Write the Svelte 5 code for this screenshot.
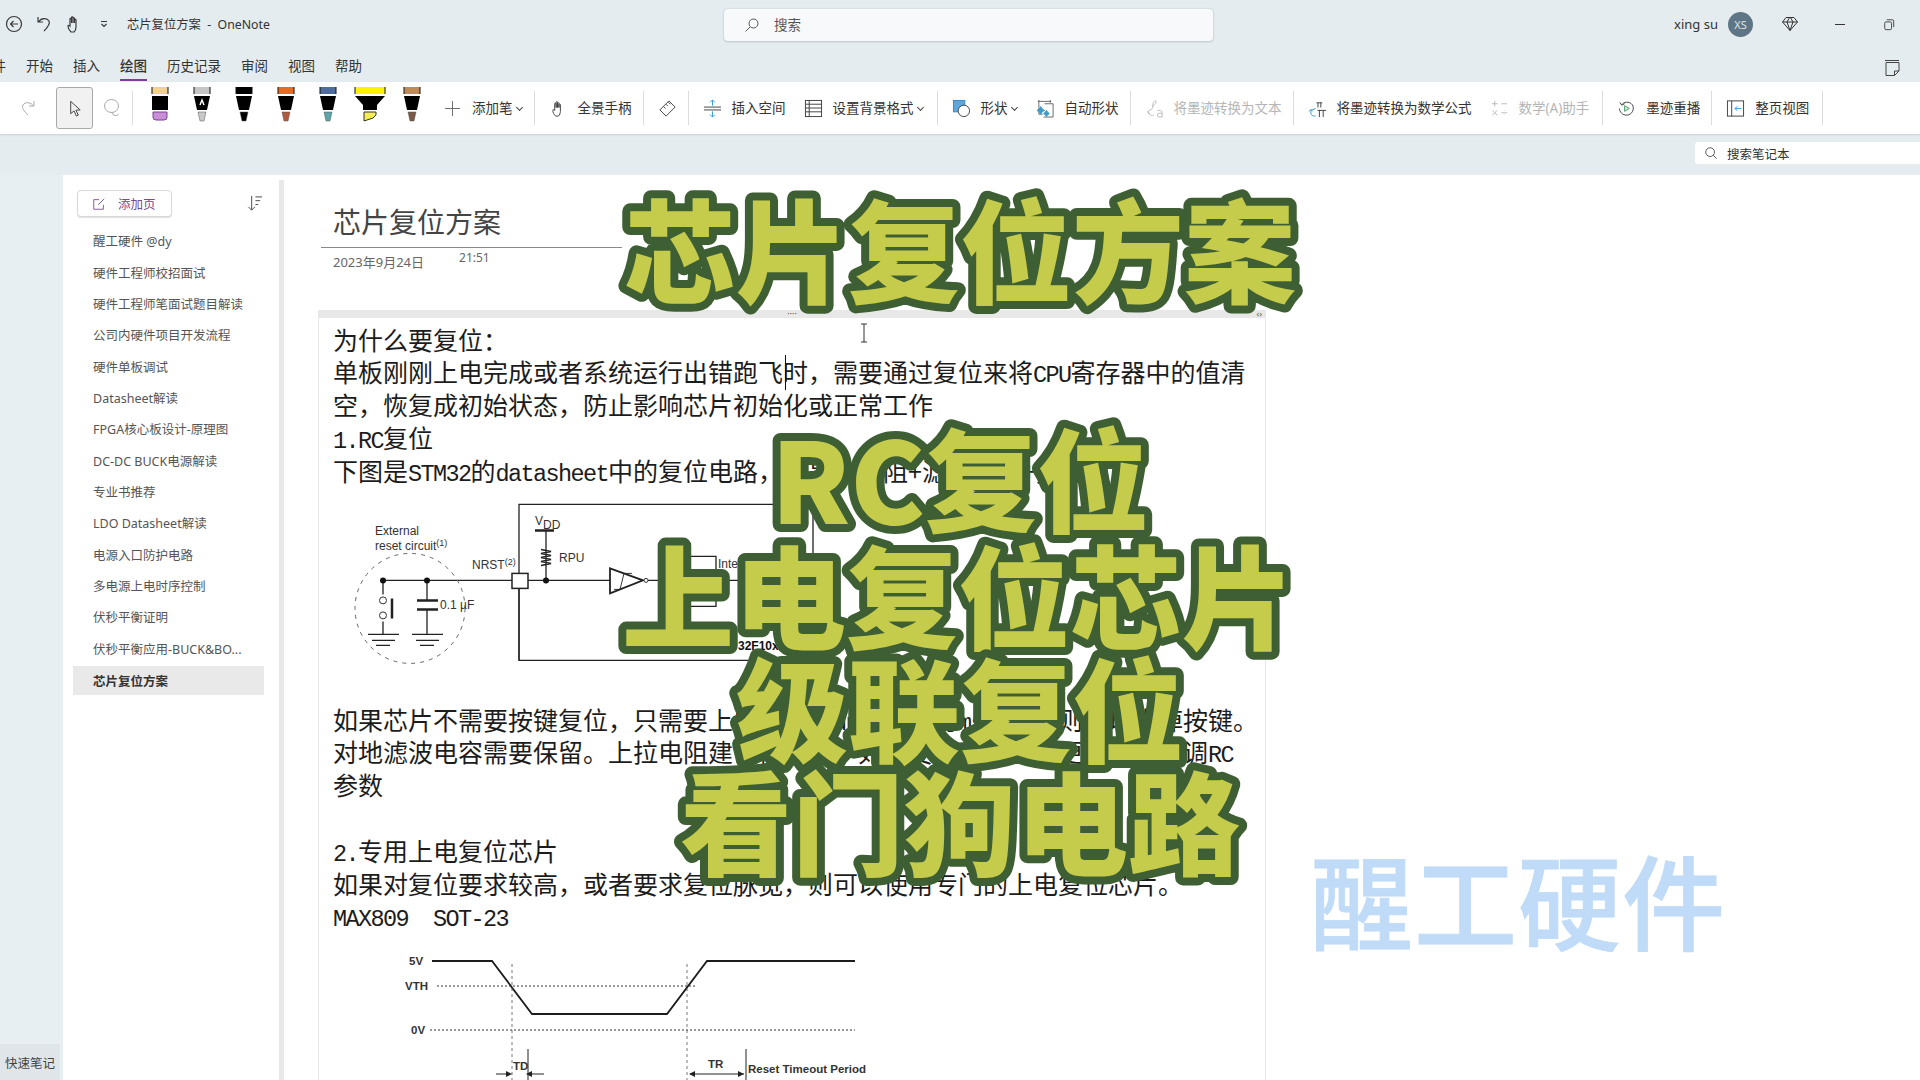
<script>
  const tabs = ['文件','开始','插入','绘图','历史记录','审阅','视图','帮助'];
  const pages = ['醒工硬件 @dy','硬件工程师校招面试','硬件工程师笔面试题目解读','公司内硬件项目开发流程','硬件单板调试','Datasheet解读','FPGA核心板设计-原理图','DC-DC BUCK电源解读','专业书推荐','LDO Datasheet解读','电源入口防护电路','多电源上电时序控制','伏秒平衡证明','伏秒平衡应用-BUCK&BO...','芯片复位方案'];
  const pens = [
    { cap:'#f2d28e', tip:'#c98fd6', kind:'eraser' },
    { cap:'#c6c6c6', tip:'#c8c8c8', kind:'pen', mark:true },
    { cap:'#000000', tip:'#000000', kind:'pen' },
    { cap:'#e86c1f', tip:'#b05a3f', kind:'pen' },
    { cap:'#4f6c9e', tip:'#5aa5a8', kind:'pen' },
    { cap:'#fff200', tip:'#f5ee50', kind:'marker' },
    { cap:'#c08a5a', tip:'#7a5a48', kind:'pen' }
  ];
</script>

<div class="app">
  <div class="titlebar">
    <svg class="qa first" viewBox="0 0 20 20"><circle cx="10" cy="10" r="7.500"/><path d="M14 10H6.500M9.500 7l-3 3 3 3"/></svg>
    <svg class="qa" viewBox="0 0 20 20"><path d="M4 3v5h5M4.500 8C7 4 13 3.500 15 7c1.500 3-1 6-5 10"/></svg>
    <svg class="qa" viewBox="0 0 20 20"><path d="M7 18c-2-2-3-4-3-6 0-1 1-1 2 0V5c0-1 1.500-1 1.500 0v4-5.500c0-1 1.500-1 1.500 0V9V4.500c0-1 1.500-1 1.500 0V9V6c0-1 1.500-1 1.500 0v7c0 2-1 4-2 5z"/></svg>
    <svg class="qa small" viewBox="0 0 10 10"><path d="M2 2.500h6M2.500 5L5 7.500 7.500 5"/></svg>
    <span class="doc">芯片复位方案&nbsp; - &nbsp;OneNote</span>
    <div class="search">
      <svg class="ic16" viewBox="0 0 16 16"><circle cx="9.500" cy="6.500" r="4.500"/><path d="M6 10l-4.500 4.500"/></svg>
      <span>搜索</span>
    </div>
    <div class="account">
      <span class="user">xing su</span>
      <span class="avatar">XS</span>
      <svg class="diamond" viewBox="0 0 18 18"><path d="M5 2.500h8l3.500 4.500L9 15.500 1.500 7zM1.500 7h15M6 7l3 8.500L12 7 9.500 2.500h-1z"/></svg>
      <span class="minimize"></span>
      <svg class="restore" viewBox="0 0 14 14"><rect x="2" y="4" width="8" height="9" rx="1.500"/><path d="M4.500 1.500H11a1.500 1.500 0 0 1 1.500 1.500v7"/></svg>
    </div>
  </div>

  <div class="menu">
    {#each tabs as t}
      <span class="tab" class:active={t === '绘图'}>{t}</span>
    {/each}
    <svg class="sticky" viewBox="0 0 18 18"><path d="M2 1.500h14M3 3.500h13v8.500l-4.500 4.500H3zM16 12h-4.500v4.500"/></svg>
  </div>

  <div class="toolbar">
    <svg class="tic redo" viewBox="0 0 20 20"><path d="M16 3v5h-5M15.500 8C13 4 7 3.500 5 7c-1.500 3 1 6 5 10"/></svg>
    <div class="select">
      <svg class="tic dark" viewBox="0 0 20 20"><path d="M6 2.500v13l3.500-3 2.500 5.500 2-1-2.500-5.200 4.500-.3z"/></svg>
    </div>
    <svg class="tic lasso" viewBox="0 0 20 20"><ellipse cx="9.500" cy="8" rx="7" ry="6.500"/><path d="M9 14.500c3 0 1 3 4 3s3-1 4-1.500"/></svg>
    <i class="sep sp12"></i>
    <div class="pens">
      {#each pens as p}
        <svg class="pen" viewBox="0 0 42 36">
          {#if p.kind === 'eraser'}
            <rect x="13" y="0" width="16" height="7" fill={p.cap}/>
            <path d="M13 0v7M29 0v7" stroke="#111" stroke-width="1"/>
            <rect x="13" y="9" width="16" height="14" fill="#000"/>
            <path d="M14 25h14v5a3 3 0 0 1-3 3h-8a3 3 0 0 1-3-3z" fill={p.tip} stroke="#7b3f98" stroke-width="1"/>
          {:else if p.kind === 'marker'}
            <rect x="6" y="0" width="30" height="7" fill={p.cap}/>
            <path d="M6 0v7M36 0v7" stroke="#111" stroke-width="1"/>
            <path d="M6 9h30l-8 9v5H14v-5z" fill="#000"/>
            <path d="M15 25h12v3l-3 3-9 3z" fill={p.tip} stroke="#333" stroke-width="1"/>
          {:else}
            <rect x="13" y="0" width="16" height="7" fill={p.cap}/>
            <path d="M13 0v7M29 0v7" stroke="#111" stroke-width="1"/>
            <path d="M13 9h16l-3 14H16z" fill="#000"/>
            {#if p.mark}<path d="M19 18l2-5 2 5" stroke="#fff" stroke-width="1.500" fill="none"/>{/if}
            <path d="M17 25h8l-2 9h-4z" fill={p.tip} stroke="#555" stroke-width="0.500"/>
          {/if}
        </svg>
      {/each}
    </div>
    <div class="tool addpen">
      <svg class="tic" viewBox="0 0 20 20"><path d="M10 2v16M2 10h16"/></svg>
      <span>添加笔</span><b class="chev"></b>
    </div>
    <i class="sep"></i>
    <div class="tool">
      <svg class="tic dark" viewBox="0 0 20 20"><path d="M7 18c-2-2-3-4-3-6 0-1 1-1 2 0V5c0-1 1.500-1 1.500 0v4-5.500c0-1 1.500-1 1.500 0V9V4.500c0-1 1.500-1 1.500 0V9V6c0-1 1.500-1 1.500 0v7c0 2-1 4-2 5z"/></svg>
      <span>全景手柄</span>
    </div>
    <i class="sep"></i>
    <div class="tool">
      <svg class="tic dark" viewBox="0 0 20 20"><path d="M2 11.500L11.500 2 18 8.500 8.500 18zM6 8l2 2M8.500 5.500l2 2M11 3.500l2 2"/></svg>
    </div>
    <i class="sep"></i>
    <div class="tool">
      <svg class="tic dark" viewBox="0 0 20 20"><path d="M1 8.500h18M1 11.500h18"/><path class="blue" d="M10 7V1M7.500 3.500L10 1l2.500 2.500M10 13v6M7.500 16.500L10 19l2.500-2.500"/></svg>
      <span>插入空间</span>
    </div>
    <div class="tool wide">
      <svg class="tic dark" viewBox="0 0 20 20"><rect x="1.500" y="1.500" width="17" height="17"/><path d="M1.500 5.500h17M1.500 9.500h17M1.500 13.500h17M5.500 1.500v17"/></svg>
      <span>设置背景格式</span><b class="chev"></b>
    </div>
    <i class="sep"></i>
    <div class="tool">
      <svg class="tic" viewBox="0 0 20 20"><rect x="1.500" y="1.500" width="12" height="12" fill="#5ba8e0" stroke="#3f86bd"/><circle cx="12.500" cy="12.500" r="6" fill="#fff" stroke="#444"/></svg>
      <span>形状</span><b class="chev"></b>
    </div>
    <div class="tool">
      <svg class="tic" viewBox="0 0 20 20"><path d="M2 2.500h14M3 1v5M15 1v3M3 6v10h4M9 5h9v14H8"/><path class="bluefill" d="M5 8l1.500 2.500L9 12l-2.500 1.500L5 16l-1.500-2.500L1 12l2.500-1.500zM11 12l1.300 2L14 15.300 12.300 16.500 11 18.500 9.700 16.500 8 15.300l1.700-1.300z"/></svg>
      <span>自动形状</span>
    </div>
    <i class="sep"></i>
    <div class="tool off">
      <svg class="tic faint" viewBox="0 0 20 20"><path d="M8 9c0-4 1-7 3-7 1 0 1 2 0 3S8 7 8 9zM8 10l-5 3 2 3M3 13c0 3 3 5 6 4"/><path d="M13 12h3c1 0 2 1 2 2v5M18 15h-3a2 2 0 0 0 0 4h3"/></svg>
      <span>将墨迹转换为文本</span>
    </div>
    <i class="sep"></i>
    <div class="tool">
      <svg class="tic dark" viewBox="0 0 20 20"><path class="blue" d="M8 10l-5 2 0 3c0 2 2 3 5 3M1 13l2-2 2 2"/><path d="M9 4h6M10.500 4v5M13.500 4v5M10 12h9M12 12v7M16 12v7"/></svg>
      <span>将墨迹转换为数学公式</span>
    </div>
    <div class="tool off wide">
      <svg class="tic faint" viewBox="0 0 20 20"><path d="M5 2v6M2 5h6M12 5h6M2.500 12l5 5M7.500 12l-5 5M12 14.500h6M15 12v.5M15 16.500v.5"/></svg>
      <span>数学(A)助手</span>
    </div>
    <i class="sep"></i>
    <div class="tool">
      <svg class="tic dark" viewBox="0 0 20 20"><path d="M3 3.500L5 6.500 8 5M5 6c2-3 8-4 11 0 3 4 0 11-6 11-4 0-7-3-7.500-7"/><path class="green" d="M8 7l5 3-5 3z"/></svg>
      <span>墨迹重播</span>
    </div>
    <i class="sep"></i>
    <div class="tool wide">
      <svg class="tic dark" viewBox="0 0 20 20"><rect x="1.500" y="2" width="17" height="16"/><path d="M6 2v16"/><path class="blue" d="M16 10H9.500M12 7.500L9.500 10l2.500 2.500"/></svg>
      <span>整页视图</span>
    </div>
    <i class="sep"></i>
  </div>

  <div class="findrow">
    <div class="find">
      <svg class="ic14" viewBox="0 0 16 16"><circle cx="7" cy="7" r="5"/><path d="M10.500 10.500l4 4"/></svg>
      <span>搜索笔记本</span>
    </div>
  </div>

  <div class="main">
    <div class="strip"><span class="quick">快速笔记</span></div>
    <aside class="side">
      <div class="sidehead">
        <button class="addpage">
          <svg class="ic14 purple" viewBox="0 0 16 16"><path d="M13 9v5H2V3h6M7 9l7-7"/></svg>
          <span>添加页</span>
        </button>
        <svg class="sort" viewBox="0 0 18 18"><path d="M6 1v15M2.500 12.500L6 16l3.500-3.500M10 2h7M10 6h5M10 10h3"/></svg>
      </div>
      <ul>
        {#each pages as p, i}
          <li class:cur={i === pages.length - 1}>{p}</li>
        {/each}
      </ul>
    </aside>
    <div class="divider"></div>
    <section class="page">
      <header class="head">
        <h1>芯片复位方案</h1>
        <div class="stamp"><span>2023年9月24日</span><span class="time">21:51</span></div>
      </header>
      <div class="band"><span class="dots">····</span><span class="arrows">‹›</span></div>
      <div class="note">
        <p>为什么要复位：</p>
        <p>单板刚刚上电完成或者系统运行出错跑飞时，需要通过复位来将<em>CPU</em>寄存器中的值清</p>
        <p>空，恢复成初始状态，防止影响芯片初始化或正常工作</p>
        <p><em>1.RC</em>复位</p>
        <p>下图是<em>STM32</em>的<em>datasheet</em>中的复位电路，它是由电阻+滤波电容+按键组成</p>
        <svg class="fig one" viewBox="319 486.600 946 216">
          <g class="wire">
            <path d="M813 504H519V660H813M813 504V660"/>
            <path d="M383 580H512M528 580H610M646 580H800"/>
            <path d="M519 587V660M546 530V580M383 580V594M383 621V634M427 580V600M427 609V634"/>
            <path class="thick" d="M535 530H554M392 598V618M417 600H438M417 609H438"/>
            <path d="M368 634H399M372 640H395M376 645H390M412 634H443M416 640H439M420 645H434"/>
            <path d="M690 580V556H716V606H690"/>
            <path class="zig" d="M541 549l10 2-10 2 10 2-10 2 10 2-10 2 10 2-10 2"/>
          </g>
          <circle class="dash" cx="410" cy="608" r="55"/>
          <circle class="dot" cx="383" cy="580" r="3"/><circle class="dot" cx="427" cy="580" r="3"/><circle class="dot" cx="546" cy="580" r="3"/>
          <circle class="open" cx="383" cy="600" r="3.500"/><circle class="open" cx="383" cy="615" r="3.500"/>
          <rect class="nrst" x="512" y="573" width="16" height="15"/>
          <path class="tri" d="M610 568L643 580 610 593z"/>
          <path class="thin" d="M614 589h6l4-16h8"/>
          <circle class="open" cx="646" cy="580" r="2"/>
          <text x="375" y="535">External</text>
          <text x="375" y="550">reset circuit<tspan class="sup" dy="-4">(1)</tspan></text>
          <text x="472" y="569">NRST<tspan class="sup" dy="-4">(2)</tspan></text>
          <text x="535" y="525">V<tspan dy="4">DD</tspan></text>
          <text x="559" y="562">RPU</text>
          <text x="440" y="609">0.1 µF</text>
          <text x="718" y="568">Internal</text>
          <text class="bold" x="738" y="650">32F10x</text>
        </svg>
        <p>如果芯片不需要按键复位，只需要上电复位，<em>up</em>时间约为<em>ms</em>，那么则可以去掉按键。</p>
        <p>对地滤波电容需要保留。上拉电阻建议使用<em>1K</em>，如果要求复位时间更长，可微调<em>RC</em></p>
        <p>参数</p>
        <p>&nbsp;</p>
        <p><em>2.</em>专用上电复位芯片</p>
        <p>如果对复位要求较高，或者要求复位脉宽，则可以使用专门的上电复位芯片。</p>
        <p class="code"><em>MAX809&nbsp; SOT-23</em></p>
        <svg class="fig two" viewBox="319 932 946 152">
          <path class="wave" d="M432 961H492L532 1014H667L707 961H855"/>
          <path class="dotted" d="M437 986H696M430 1030H855"/>
          <path class="vline" d="M512 964V1080M687 964V1080"/>
          <path class="wire2" d="M528 1049V1080M746 1049V1080"/>
          <path class="wire2" d="M496 1074H510M544 1074H530M690 1074H744"/>
          <path class="fill" d="M512 1074l-6-3v6zM526 1074l6-3v6zM689 1074l6-3v6zM744 1074l-6-3v6z"/>
          <g class="timing">
            <text x="409" y="965">5V</text>
            <text x="405" y="990">VTH</text>
            <text x="411" y="1034">0V</text>
            <text x="513" y="1070">TD</text>
            <text x="708" y="1068">TR</text>
            <text x="748" y="1073">Reset Timeout Period</text>
          </g>
        </svg>
      </div>
    </section>
  </div>

  <span class="caret"></span>
  <svg class="ibeam" viewBox="0 0 8 20"><path d="M1 1h6M4 1v18M1 19h6"/></svg>

  <div class="watermark">醒工硬件</div>

  <svg class="big" viewBox="0 0 1920 1080">
    <text x="960" y="295">芯片复位方案</text>
    <text x="960" y="524">RC复位</text>
    <text x="958" y="641">上电复位芯片</text>
    <text x="960" y="754">级联复位</text>
    <text x="960" y="867">看门狗电路</text>
  </svg>
</div>

<style>
  :global(body) { margin: 0; }
  .app {
    position: relative; width: 1920px; height: 1080px; overflow: hidden;
    display: flex; flex-direction: column; background: #e4ecef; color: #333;
    font-family: "Noto Sans", "Noto Sans CJK SC", sans-serif; font-size: 13.5px;
  }
  svg { fill: none; stroke: #444; stroke-width: 1; display: block; flex: none; }

  .titlebar { height: 41px; display: flex; align-items: center; padding: 7px 0 0 4px; position: relative; box-sizing: border-box; }
  .qa { width: 20px; height: 20px; margin-right: 10px; stroke: #3a3a3a; stroke-width: 1.200; }
  .qa.small { width: 10px; height: 10px; margin: 0 18px 0 5px; }
  .doc { font-size: 12.300px; color: #333; }
  .search {
    position: absolute; left: 724px; top: 9px; width: 489px; height: 32px; box-sizing: border-box;
    display: flex; align-items: center; gap: 12px; padding-left: 20px;
    background: #f7f9fa; border-radius: 4px; box-shadow: 0 0 2px #b9c2c7, 0 1px 2px #c2cace;
    font-size: 13.500px; color: #555;
  }
  .search span { margin: -2px 0 0 2px; }
  .ic16 { width: 16px; height: 16px; stroke: #555; }
  .ic14 { width: 14px; height: 14px; stroke: #444; }
  .account { margin-left: auto; display: flex; align-items: center; height: 100%; }
  .user { font-size: 13px; color: #333; }
  .avatar {
    width: 25px; height: 25px; border-radius: 50%; background: #5d7585; color: #dfe7ea;
    font-size: 11px; display: flex; align-items: center; justify-content: center; margin-left: 10px;
  }
  .diamond { width: 18px; height: 18px; margin-left: 28px; stroke: #333; }
  .minimize { width: 10px; height: 1px; background: #333; margin-left: 36px; }
  .restore { width: 12px; height: 13px; margin-left: 38px; margin-right: 25px; stroke: #333; }

  .menu { height: 41px; display: flex; align-items: center; gap: 20px; margin-left: -21px; position: relative; }
  .tab { height: 100%; display: flex; align-items: center; position: relative; white-space: nowrap; padding-top: 7px; box-sizing: border-box; color: #333; }
  .tab.active { font-weight: 500; }
  .tab.active::after { content: ""; position: absolute; left: 0; right: 0; bottom: 1px; height: 2px; background: #7b3f98; }
  .sticky { position: absolute; left: 1904px; top: 18px; width: 18px; height: 18px; stroke: #444; }

  .toolbar {
    height: 52px; background: #fff; display: flex; align-items: center; padding-left: 18px;
    box-shadow: 0 1px 2px #c9d0d3; position: relative; z-index: 1;
  }
  .tic { width: 19px; height: 19px; stroke: #666; }
  .tic.dark { stroke: #3f3f3f; }
  .tic.faint { stroke: #bbb; }
  .redo { width: 20px; height: 20px; stroke: #aaa; }
  .select {
    width: 37px; height: 42px; box-sizing: border-box; margin-left: 18px; background: #f1f1f1;
    border: 1px solid #a9a9a9; border-radius: 3px; display: flex; align-items: center; justify-content: center;
  }
  .lasso { width: 20px; height: 20px; margin-left: 9px; stroke: #aaa; }
  .sep { width: 1px; height: 34px; background: #dcdcdc; margin: 0 5px 0 2px; flex: none; }
  .sep.sp12 { margin: 0 6px 0 10px; }
  .pens { display: flex; }
  .pen { width: 42px; height: 36px; stroke: none; margin-top: -6px; }
  .tool { display: flex; align-items: center; gap: 10px; padding: 0 9px; white-space: nowrap; color: #333; }
  .tool span { margin-bottom: 3px; }
  .tool.wide { padding-right: 11px; }
  .addpen { margin-left: 1px; }
  .tool.off { color: #b5b5b5; }
  .chev { width: 4px; height: 4px; border-right: 1px solid #444; border-bottom: 1px solid #444; transform: rotate(45deg); margin: -2px 1px 0 -6px; }
  .blue { stroke: #3a9bc9; }
  .bluefill { fill: #3a9bc9; stroke: #3a9bc9; }
  .green { fill: #cfe6cf; stroke: #4f9a6a; }

  .findrow { height: 41px; display: flex; justify-content: flex-end; padding-top: 8px; box-sizing: border-box; }
  .find {
    width: 225px; height: 22px; background: #fff; border-radius: 3px 0 0 3px; display: flex; align-items: center;
    gap: 9px; padding-left: 9px; box-sizing: border-box; font-size: 12.500px; color: #333;
  }

  .main { flex: 1; display: flex; min-height: 0; background: #fff; }
  .strip { width: 63px; background: #e7eff2; display: flex; flex-direction: column; justify-content: flex-end; flex: none; }
  .quick {
    width: 60px; height: 36px; background: #dfe5e8; font-size: 12.500px; color: #444;
    display: flex; align-items: center; justify-content: center;
  }
  .side { width: 216px; flex: none; background: #fff; border-top-left-radius: 6px; }
  .sidehead { display: flex; align-items: center; justify-content: space-between; padding: 15px 16px 0 14px; }
  .addpage {
    width: 95px; height: 27px; display: flex; align-items: center; gap: 12px; padding: 0 0 0 14px; box-sizing: border-box;
    background: #fff; border: 1px solid #d9d9d9; border-radius: 4px; box-shadow: 0 1px 1px #e0e0e0;
    color: #7a4a90; font: inherit; font-size: 12.500px;
  }
  .purple { stroke: #7a4a90; }
  .sort { width: 17px; height: 17px; stroke: #444; }
  ul { list-style: none; margin: 8px 0 0; padding: 0 15px 0 10px; }
  li { height: 31.350px; display: flex; align-items: center; padding-left: 20px; font-size: 12.500px; color: #555; white-space: nowrap; }
  li.cur { background: #e9e9e9; font-weight: 700; color: #333; height: 29px; margin-top: 2px; }
  .divider { width: 5px; background: #e8e8e8; margin-top: 5px; flex: none; }

  .page { flex: 1; min-width: 0; }
  .head { height: 135px; margin-left: 37px; box-sizing: border-box; padding-top: 26px; }
  h1 {
    margin: 0; width: 301px; height: 47px; box-sizing: border-box; padding-left: 12px; line-height: 40px; white-space: nowrap;
    font-size: 28px; font-weight: 400; color: #444; border-bottom: 1px solid #8a8a8a;
    font-family: "Noto Sans CJK SC", sans-serif;
  }
  .stamp { display: flex; align-items: flex-start; padding: 4px 0 0 12px; gap: 35px; font-size: 13px; color: #666; line-height: 20px; }
  .time { font-size: 12px; margin-top: -4px; }
  .band {
    margin-left: 34px; width: 948px; height: 8px; background: #e8e8e8; position: relative;
    display: flex; justify-content: center; align-items: center; font-size: 9px; line-height: 8px; color: #555;
  }
  .arrows { position: absolute; right: 4px; top: 0; font-size: 9px; }
  .note {
    margin-left: 34px; width: 948px; box-sizing: border-box; border-right: 1px solid #e8e8e8; border-left: 1px solid #e8e8e8;
    padding-top: 4.600px; font-family: "Noto Sans CJK SC", sans-serif; font-size: 25px; color: #1c1c1c;
  }
  p { margin: 0 0 0 14px; height: 32.800px; line-height: 32.800px; white-space: nowrap; }
  em { font-family: "Liberation Mono", monospace; font-style: normal; font-size: 23.500px; letter-spacing: -1.600px; }
  .fig { width: 946px; }
  .one { height: 216px; }
  .two { height: 152px; }
  .note svg text { font-family: "Liberation Sans", sans-serif; font-size: 12px; fill: #333; stroke: none; }
  .note svg .bold { font-weight: 700; fill: #111; }
  .sup { font-size: 9px; }
  .wire path { stroke: #222; stroke-width: 1.300; }
  .wire .thick { stroke-width: 2.500; }
  .wire .zig { stroke-width: 1.500; }
  .thin { stroke: #222; stroke-width: 0.900; }
  .dash { stroke: #666; stroke-dasharray: 4 5; }
  .dot { fill: #111; stroke: none; }
  .open { fill: #fff; stroke: #333; }
  .nrst { fill: #fff; stroke: #222; stroke-width: 1.500; }
  .tri { fill: #fff; stroke: #222; stroke-width: 1.800; }
  .wave { stroke: #1c1c1c; stroke-width: 1.800; }
  .dotted { stroke: #333; stroke-dasharray: 2 2; }
  .vline { stroke: #555; stroke-dasharray: 3 3; stroke-width: 0.800; }
  .wire2 { stroke: #222; stroke-width: 1; }
  .fill { fill: #222; stroke: none; }
  .note svg .timing text { font-weight: 700; font-size: 11.500px; }

  .caret { position: absolute; left: 785px; top: 355px; width: 1px; height: 35px; background: #111; }
  .ibeam { position: absolute; left: 860px; top: 323px; width: 8px; height: 20px; stroke: #333; }

  .watermark {
    position: absolute; left: 1310px; top: 824px; font-family: "Noto Sans CJK SC", sans-serif;
    font-size: 103px; line-height: 150px; letter-spacing: 1px; font-weight: 500; color: #bfdbf7; white-space: nowrap;
    -webkit-text-stroke: 0.800px #bfdbf7;
  }
  .big {
    position: absolute; left: 0; top: 0; width: 1920px; height: 1080px; stroke: none; pointer-events: none;
  }
  .big text {
    font-family: "Noto Sans CJK SC", sans-serif; font-weight: 900; font-size: 112px;
    text-anchor: middle; fill: #c5cb4b; stroke: #3e5f33; stroke-width: 16px;
    stroke-linejoin: round; paint-order: stroke fill;
  }
</style>
